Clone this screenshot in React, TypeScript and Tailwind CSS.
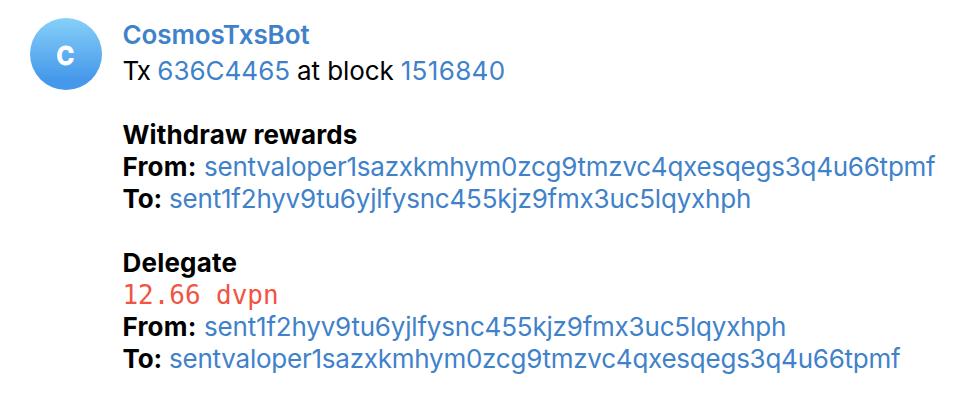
import type { ReactNode } from "react";

const Link = ({ children }: { children: ReactNode }) => (
  <a className="text-[#3f82ca]">{children}</a>
);

const validator = (
  <span className="tracking-[-0.24px]">sentvaloper1sazxkmhym0zcg9tmzvc4qxesqegs3q4u66tpmf</span>
);
const account = (
  <span className="tracking-[-0.2px]">sent1f2hyv9tu6yjlfysnc455kjz9fmx3uc5lqyxhph</span>
);

const From = ({ address }: { address: ReactNode }) => (
  <p><b className="mr-[7.5px] tracking-[0.2px]">From:</b><Link>{address}</Link></p>
);

const To = ({ address }: { address: ReactNode }) => (
  <p><b className="mr-[7px] tracking-[-0.15px]">To:</b><Link>{address}</Link></p>
);

export default function App() {
  return (
    <main className="flex h-[410px] w-[962px] items-start gap-[20.5px] overflow-hidden bg-white pl-[30px] pt-[18px] font-['Inter',sans-serif] text-[26px] leading-8 text-black">
      <div className="flex size-[72px] shrink-0 items-center justify-center rounded-full bg-linear-to-b from-[#86d0f8] to-[#4698ea] to-85% text-[25px] font-bold text-white">
        <span className="mr-0.5 mt-1 scale-x-95 [-webkit-text-stroke:0.9px_white] [stroke-linejoin:round]">C</span>
      </div>
      <div className="whitespace-nowrap pt-px">
        <h1 className="mb-1 font-semibold tracking-[-0.1px] text-[#3f82ca]">CosmosTxsBot</h1>
        <p>
          <span className="mr-[7px] tracking-[-0.8px]">Tx</span>
          <a className="text-[#3f82ca]">636C4465</a>
          <span className="mx-[7px] tracking-[-0.1px]">at block</span>
          <a className="tracking-[0.35px] text-[#3f82ca]">1516840</a>
        </p>
        <h2 className="mt-8 font-bold tracking-[0.13px]">Withdraw rewards</h2>
        <From address={validator} />
        <To address={account} />
        <h2 className="mt-8 font-bold tracking-[0.2px]">Delegate</h2>
        <p className="font-['DejaVu_Sans_Mono',monospace] tracking-[-0.05px] text-[#f05443]">12.66 dvpn</p>
        <From address={account} />
        <To address={validator} />
      </div>
    </main>
  );
}
